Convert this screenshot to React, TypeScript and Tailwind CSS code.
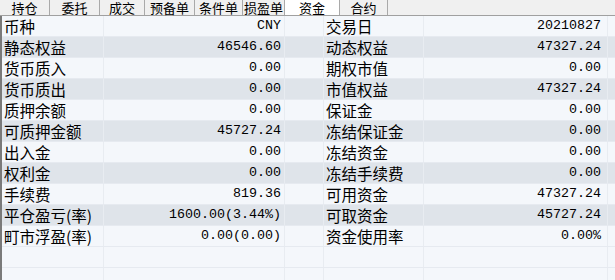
const tabs = [
  { name: "持仓", w: "w-[50px]" },
  { name: "委托", w: "w-[50px]" },
  { name: "成交", w: "w-[45px]" },
  { name: "预备单", w: "w-[50px]" },
  { name: "条件单", w: "w-[48px]" },
  { name: "损盈单", w: "w-[42px]" },
  { name: "资金", w: "w-[55px]", active: true },
  { name: "合约", w: "w-[48px]" },
];

const rows: [string, string, string, string][] = [
  ["币种", "CNY", "交易日", "20210827"],
  ["静态权益", "46546.60", "动态权益", "47327.24"],
  ["货币质入", "0.00", "期权市值", "0.00"],
  ["货币质出", "0.00", "市值权益", "47327.24"],
  ["质押余额", "0.00", "保证金", "0.00"],
  ["可质押金额", "45727.24", "冻结保证金", "0.00"],
  ["出入金", "0.00", "冻结资金", "0.00"],
  ["权利金", "0.00", "冻结手续费", "0.00"],
  ["手续费", "819.36", "可用资金", "47327.24"],
  ["平仓盈亏(率)", "1600.00(3.44%)", "可取资金", "45727.24"],
  ["町市浮盈(率)", "0.00(0.00)", "资金使用率", "0.00%"],
  ["", "", "", ""],
  ["", "", "", ""],
];

const cjk = "font-['Noto_Sans_CJK_SC',sans-serif]";
const mono = "font-['Liberation_Mono','Noto_Sans_CJK_SC',monospace]";

export default function App() {
  return (
    <div className={`w-[615px] h-[280px] overflow-hidden bg-[#f4f7fb] text-black ${cjk}`}>
      {/* tab strip */}
      <div className="flex h-[16px] bg-[#f0f0f0] border-b border-[#a0a0a0]">
        {tabs.map((t) => (
          <div
            key={t.name}
            className={`${t.w} flex justify-center border-r border-[#a9a9a9] text-[13px] leading-[15px] whitespace-nowrap ${
              t.active ? "bg-white" : ""
            }`}
          >
            {t.name}
          </div>
        ))}
      </div>

      {/* fund grid */}
      <div className="border-l-2 border-[#7a7a7a]">
        {rows.map((r, i) => {
          const gray = i % 2 === 1 && i < 11;
          return (
            <div
              key={i}
              className={`flex h-[21px] border-b border-[#e6eaf0] ${gray ? "bg-[#dfe4ea]" : "bg-[#f4f7fb]"}`}
            >
              <div className="w-[102px] pl-[2px] border-r border-[#e8ecf1] text-[15.5px] leading-[20px] whitespace-nowrap">
                {r[0]}
              </div>
              <div className={`w-[181px] pr-[3px] text-right border-r border-[#e8ecf1] text-[13.33px] leading-[20px] whitespace-nowrap ${mono}`}>
                {r[1]}
              </div>
              <div className="w-[39px] border-r border-[#e8ecf1]" />
              <div className="w-[100px] pl-[2px] border-r border-[#e8ecf1] text-[15.5px] leading-[20px] whitespace-nowrap">
                {r[2]}
              </div>
              <div className={`w-[184px] pr-[6px] text-right border-r border-[#e8ecf1] text-[13.33px] leading-[20px] whitespace-nowrap ${mono}`}>
                {r[3]}
              </div>
            </div>
          );
        })}
      </div>
    </div>
  );
}
